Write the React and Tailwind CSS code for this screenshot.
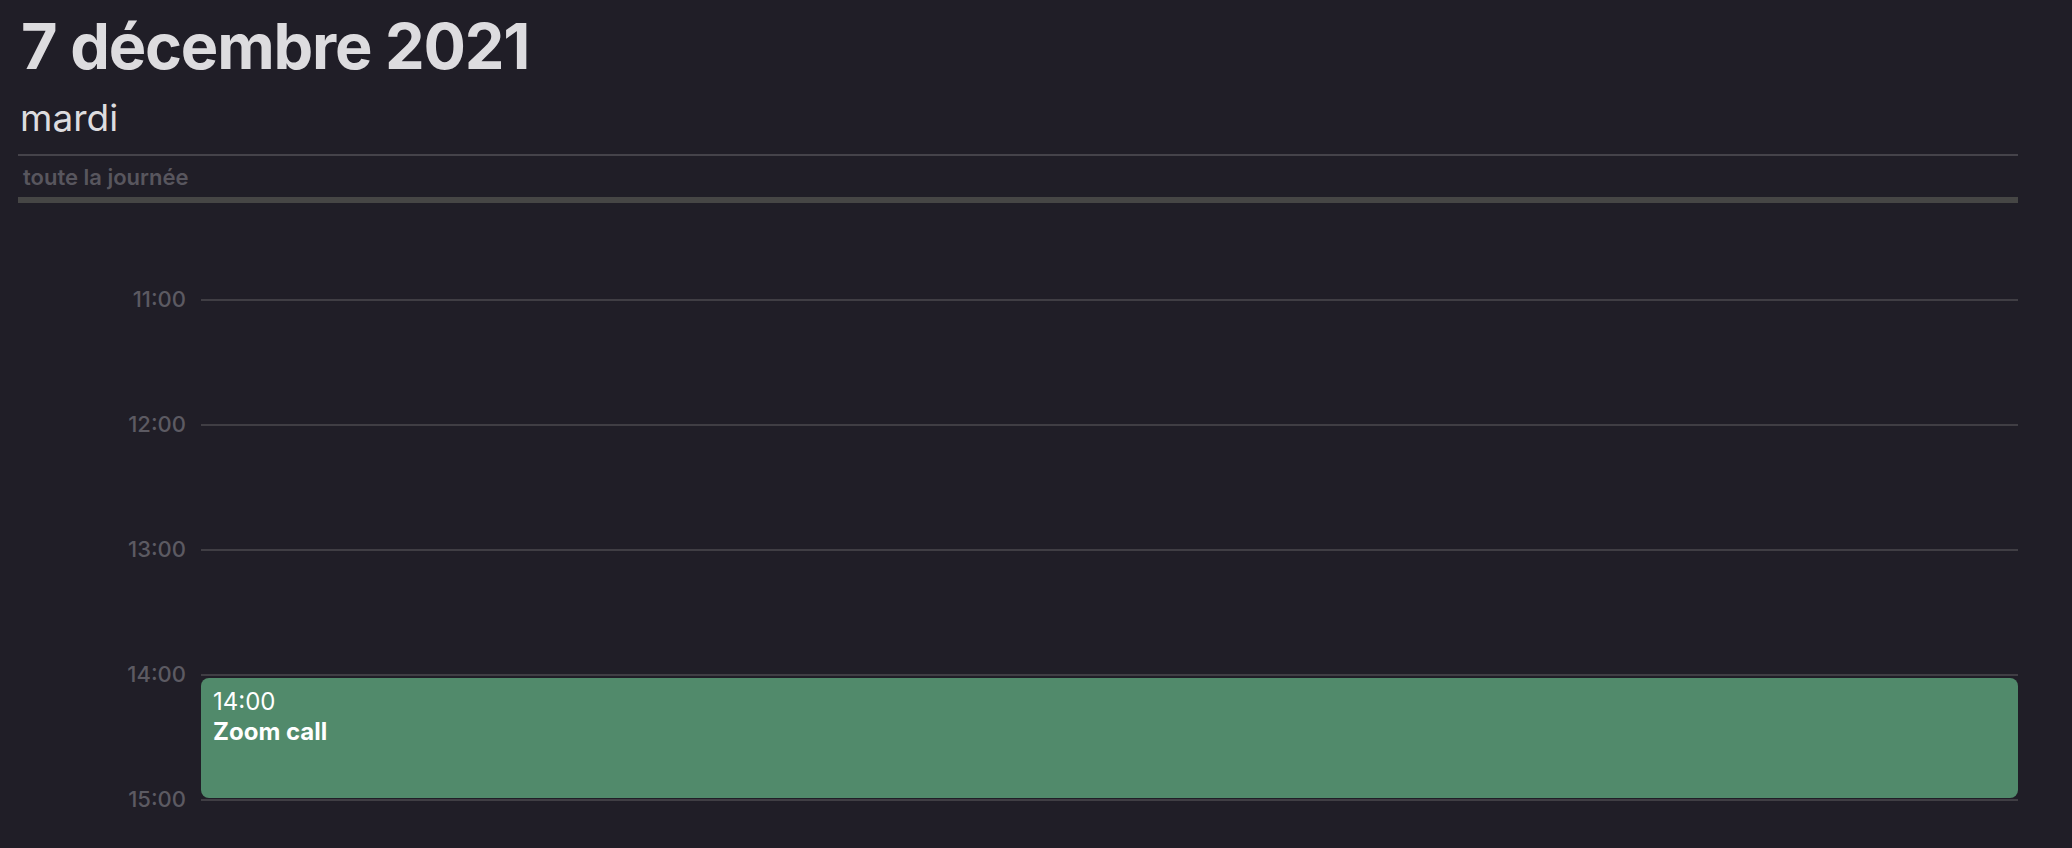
import React from "react";

const hours = ["11:00", "12:00", "13:00", "14:00", "15:00"];

const events = [{ hour: "14:00", time: "14:00", title: "Zoom call" }];

const HourRow = ({ label }) => {
  const event = events.find((e) => e.hour === label);
  return (
    <div className="flex items-start h-[125px]">
      <div className="w-[168px] shrink-0 text-right text-[22px] leading-[26px] -mt-[13px] font-medium text-[#5c5a62]">
        {label}
      </div>
      <div className="relative flex-1 ml-[15px] border-t-2 border-[#403e44]">
        {event && (
          <div className="absolute left-0 right-0 top-[2px] h-[120px] rounded-lg bg-[#518a6b] pl-[12px] pt-[9px] text-white text-[24px] leading-[30px]">
            <div>{event.time}</div>
            <div className="font-bold">{event.title}</div>
          </div>
        )}
      </div>
    </div>
  );
};

export default function App() {
  return (
    <div className="h-[848px] overflow-hidden bg-[#201e27] pl-[18px] pr-[54px] font-['Inter',sans-serif]">
      {/* header */}
      <h1 className="pt-[15px] pl-[3px] text-[63px] leading-none font-bold text-[#dddcdf] tracking-[-1.2px]">
        7 décembre 2021
      </h1>
      <div className="mt-[21px] pl-[2px] text-[37px] leading-none font-normal text-[#dddcdf]">
        mardi
      </div>
      <div className="mt-[18px] h-[2px] bg-[#45434a]" />
      <div className="mt-[10px] pl-[5px] text-[22px] leading-none font-semibold text-[#58565e]">
        toute la journée
      </div>
      <div className="mt-[9px] h-[6px] bg-[#464645]" />

      {/* time grid */}
      <div className="pt-[96px]">
        {hours.map((h) => (
          <HourRow key={h} label={h} />
        ))}
      </div>
    </div>
  );
}
